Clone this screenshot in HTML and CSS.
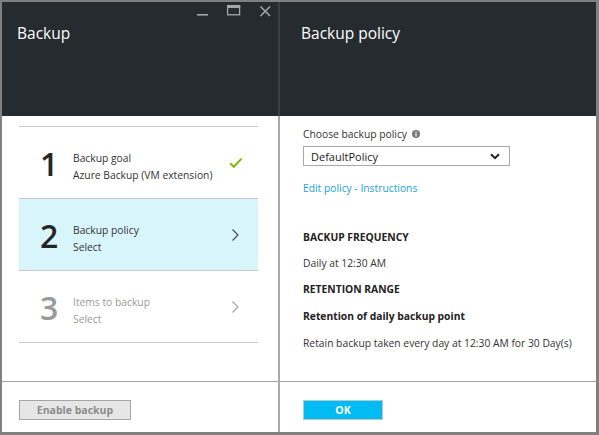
FILE: index.html
```html
<!DOCTYPE html>
<html>
<head>
<meta charset="utf-8">
<link rel="stylesheet" href="styles.css">
</head>
<body>
<div class="window">
  <section class="pane pane-left">
    <header class="header">
      <div class="header-top">
        <svg class="controls" width="80" height="19" viewBox="0 0 80 19">
          <rect x="2" y="12" width="11" height="1.6" fill="#a3a7ab"/>
          <rect x="32.6" y="3.6" width="12" height="9.2" fill="none" stroke="#a3a7ab" stroke-width="1.3"/>
          <rect x="32" y="3" width="13.2" height="3" fill="#a3a7ab"/>
          <path d="M65.5 4.5 L75 14 M75 4.5 L65.5 14" stroke="#a3a7ab" stroke-width="1.5" fill="none"/>
        </svg>
      </div>
      <h1 class="title title-left">Backup</h1>
    </header>
    <div class="body body-left">
      <ul class="steps">
        <li class="step">
          <span class="num">1</span>
          <span class="labels"><span>Backup goal</span><span>Azure Backup (VM extension)</span></span>
          <svg class="step-icon" width="14" height="12" viewBox="0 0 14 12"><path d="M1.2 6.2 L4.8 9.8 L12.6 1.6" fill="none" stroke="#7fba00" stroke-width="2"/></svg>
        </li>
        <li class="step step-active">
          <span class="num">2</span>
          <span class="labels"><span>Backup policy</span><span>Select</span></span>
          <svg class="step-icon" width="14" height="14" viewBox="0 0 14 14"><path d="M4.5 1.5 L10 7 L4.5 12.5" fill="none" stroke="#444" stroke-width="1.1"/></svg>
        </li>
        <li class="step step-disabled">
          <span class="num">3</span>
          <span class="labels"><span>Items to backup</span><span>Select</span></span>
          <svg class="step-icon" width="14" height="14" viewBox="0 0 14 14"><path d="M4.5 1.5 L10 7 L4.5 12.5" fill="none" stroke="#a0a0a0" stroke-width="1.1"/></svg>
        </li>
      </ul>
    </div>
    <footer class="footer footer-left">
      <button class="btn btn-disabled">Enable backup</button>
    </footer>
  </section>
  <section class="pane pane-right">
    <header class="header">
      <div class="header-top"></div>
      <h1 class="title title-right">Backup policy</h1>
    </header>
    <div class="body body-right">
      <div class="field-label">Choose backup policy
        <svg class="info" width="8" height="8" viewBox="0 0 8 8"><circle cx="4" cy="4" r="4" fill="#7a7a7a"/><rect x="3.4" y="3.3" width="1.2" height="3.2" fill="#fff"/><rect x="3.4" y="1.4" width="1.2" height="1.2" fill="#fff"/></svg>
      </div>
      <div class="select">
        <span>DefaultPolicy</span>
        <svg width="10" height="7" viewBox="0 0 10 7"><path d="M1 1.2 L5 5.2 L9 1.2" fill="none" stroke="#222" stroke-width="2"/></svg>
      </div>
      <a class="link">Edit policy - Instructions</a>
      <div class="section-head first">BACKUP FREQUENCY</div>
      <div class="text">Daily at 12:30 AM</div>
      <div class="section-head">RETENTION RANGE</div>
      <div class="subhead">Retention of daily backup point</div>
      <div class="text">Retain backup taken every day at 12:30 AM for 30 Day(s)</div>
    </div>
    <footer class="footer footer-right">
      <button class="btn btn-primary">OK</button>
    </footer>
  </section>
</div>
</body>
</html>
```

FILE: styles.css
```css
* { box-sizing: border-box; }
html, body { margin: 0; padding: 0; }
body {
  width: 599px;
  height: 435px;
  font-family: "Open Sans", "Noto Sans", sans-serif;
  font-size: 10.3px;
  color: #333;
  background: #fff;
}
.window {
  display: flex;
  width: 599px;
  height: 435px;
  border-style: solid;
  border-color: #808080;
  border-width: 2px 3px 3px 2px;
}
.pane {
  display: flex;
  flex-direction: column;
}
.pane-left { width: 278px; }
.pane-right { flex: 1; }
.header {
  height: 114px;
  background: #262b30;
}
.pane-left .header { border-right: 2px solid #3a3f44; }
.header-top {
  height: 19px;
  display: flex;
  justify-content: flex-end;
  padding-right: 3px;
}
.controls { display: block; }
.title {
  margin: 0;
  font-weight: normal;
  font-size: 15.5px;
  line-height: 24px;
  color: #fff;
}
.title-left { padding-left: 15px; }
.title-right { padding-left: 21px; }
.body { flex: 1; }
.body-left { border-right: 2px solid #a9a9a9; padding: 10px 20px 0 17px; }
.steps {
  list-style: none;
  margin: 0;
  padding: 0;
  border-top: 1px solid #c8c8c8;
}
.step {
  display: flex;
  align-items: center;
  height: 72px;
  border-bottom: 1px solid #c8c8c8;
  color: #333;
}
.step-active { background: #d9f5fc; }
.step-disabled { color: #9a9a9a; }
.num {
  width: 54px;
  padding-left: 21px;
  padding-top: 2px;
  font-size: 32px;
  font-weight: 600;
  line-height: 36px;
  color: #252525;
}
.step-disabled .num { color: #999; }
.labels {
  flex: 1;
  display: flex;
  flex-direction: column;
  line-height: 17px;
  padding-top: 9px;
}
.step-icon { margin-right: 15px; display: block; }
.step-active .step-icon, .step-disabled .step-icon { margin-right: 16px; }
.footer {
  height: 51px;
  border-top: 1px solid #a0a0a0;
  padding-top: 18px;
}
.footer-left { border-right: 2px solid #a9a9a9; padding-left: 17px; }
.footer-right { padding-left: 23px; }
.btn {
  display: block;
  height: 20px;
  font-family: inherit;
  font-size: 10.5px;
  font-weight: bold;
  padding: 0;
  line-height: 18px;
}
.btn-disabled {
  width: 112px;
  background: #e6e6e6;
  border: 1px solid #a6a6a6;
  color: #8c8c8c;
}
.btn-primary {
  width: 80px;
  background: #00bcf2;
  border: 1px solid #b8c8cc;
  color: #fff;
}
.body-right { padding: 10px 0 0 23px; white-space: nowrap; }
.field-label { line-height: 16px; }
.info { vertical-align: 0px; margin-left: 2px; }
.select {
  margin-top: 4px;
  width: 207px;
  height: 20px;
  border: 1px solid #a9a9a9;
  display: flex;
  align-items: center;
  justify-content: space-between;
  padding: 0 9px 0 7px;
  font-size: 11px;
  color: #222;
}
.select svg { display: block; }
.link {
  display: block;
  margin-top: 14px;
  line-height: 16px;
  color: #1aa1dc;
}
.section-head {
  margin-top: 10px;
  line-height: 16px;
  font-weight: bold;
  color: #222;
}
.section-head.first { margin-top: 33px; }
.subhead {
  margin-top: 11px;
  line-height: 16px;
  font-weight: bold;
  color: #222;
}
.text {
  margin-top: 10px;
  line-height: 16px;
  color: #333;
}
.subhead + .text { margin-top: 11px; }
```
